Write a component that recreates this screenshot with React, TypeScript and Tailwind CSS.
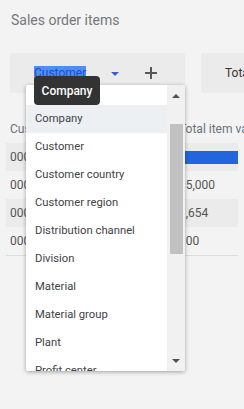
import React from 'react'

const items = [
  'Company',
  'Customer',
  'Customer country',
  'Customer region',
  'Distribution channel',
  'Division',
  'Material',
  'Material group',
  'Plant',
  'Profit center',
]

const rows = [
  { id: '0000010001', value: '15,000', bar: true, shade: true },
  { id: '0000010002', value: '35,000', bar: false, shade: false },
  { id: '0000010003', value: '1,654', bar: false, shade: true },
  { id: '0000010004', value: '100', bar: false, shade: false },
]

function Tooltip() {
  return (
    <div className="absolute left-[34px] top-[76px] z-20 flex h-[29px] w-[66px] items-center justify-center rounded-[4px] bg-[#333333] text-[12px] font-medium text-white">
      Company
    </div>
  )
}

function Dropdown() {
  return (
    <div className="absolute left-[26px] top-[85px] z-10 flex h-[286px] w-[159px] overflow-hidden rounded-[2px] bg-white shadow-[0_1px_4px_rgba(0,0,0,0.35)]">
      <ul className="flex-1 pt-5">
        {items.map((item, i) => (
          <li
            key={item}
            className={`flex h-7 items-center whitespace-nowrap pl-[9px] text-[11.25px] text-[#3f4246] ${i === 0 ? 'bg-[#edf0f3]' : ''}`}
          >
            {item}
          </li>
        ))}
      </ul>
      <div className="flex w-[18px] flex-col items-center bg-[#f1f1f1]">
        <div className="mt-[9px] h-0 w-0 border-x-[4px] border-b-[4px] border-x-transparent border-b-[#505050]" />
        <div className="mt-[26px] h-[130px] w-[13px] bg-[#c1c1c1]" />
        <div className="mt-auto mb-[8px] h-0 w-0 border-x-[4px] border-t-[4px] border-x-transparent border-t-[#505050]" />
      </div>
    </div>
  )
}

export default function App() {
  return (
    <div className="relative h-[409px] w-full overflow-hidden bg-[#f3f3f3] font-['Roboto',sans-serif]">
      <h1 className="px-[11px] pt-[10px] text-[14px] leading-5 text-[#74777b]">Sales order items</h1>

      <div className="mt-[23px] flex gap-4 pl-[10px]">
        <div className="flex h-10 w-[175px] shrink-0 items-center rounded-[2px] bg-[#ebebeb] pl-6">
          <span className="bg-[#4d8ef5] text-[12px] leading-[14px] text-[#1c4fc9]">Customer</span>
          <div className="ml-[25px] mt-[2px] h-0 w-0 border-x-[4px] border-t-[4px] border-x-transparent border-t-[#3b5bdb]" />
          <svg className="ml-[25px]" width="14" height="14" viewBox="0 0 14 14">
            <path d="M7 1v12M1 7h12" stroke="#585858" strokeWidth="2" />
          </svg>
        </div>
        <div className="flex h-10 w-[175px] shrink-0 items-center whitespace-nowrap rounded-[2px] bg-[#ebebeb] pl-6">
          <span className="text-[12px] text-[#333]">Total item value</span>
        </div>
      </div>

      <div className="mt-[22px] px-[6px]">
        <div className="flex h-[28px] items-center whitespace-nowrap text-[12px] text-[#67717e]">
          <span className="w-[173px] shrink-0 overflow-hidden pl-1">Customer</span>
          <span>Total item value</span>
        </div>
        {rows.map((r) => (
          <div
            key={r.id}
            className={`flex h-7 items-center whitespace-nowrap text-[12px] text-[#555] ${r.shade ? 'bg-[#ebebeb]' : ''}`}
          >
            <span className="w-[173px] shrink-0 overflow-hidden pl-1">{r.id}</span>
            {r.bar ? <div className="h-[13px] flex-1 bg-[#2266dd]" /> : <span>{r.value}</span>}
          </div>
        ))}
        <div className="h-px bg-[#dcdcdc]" />
      </div>

      <Dropdown />
      <Tooltip />
    </div>
  )
}
